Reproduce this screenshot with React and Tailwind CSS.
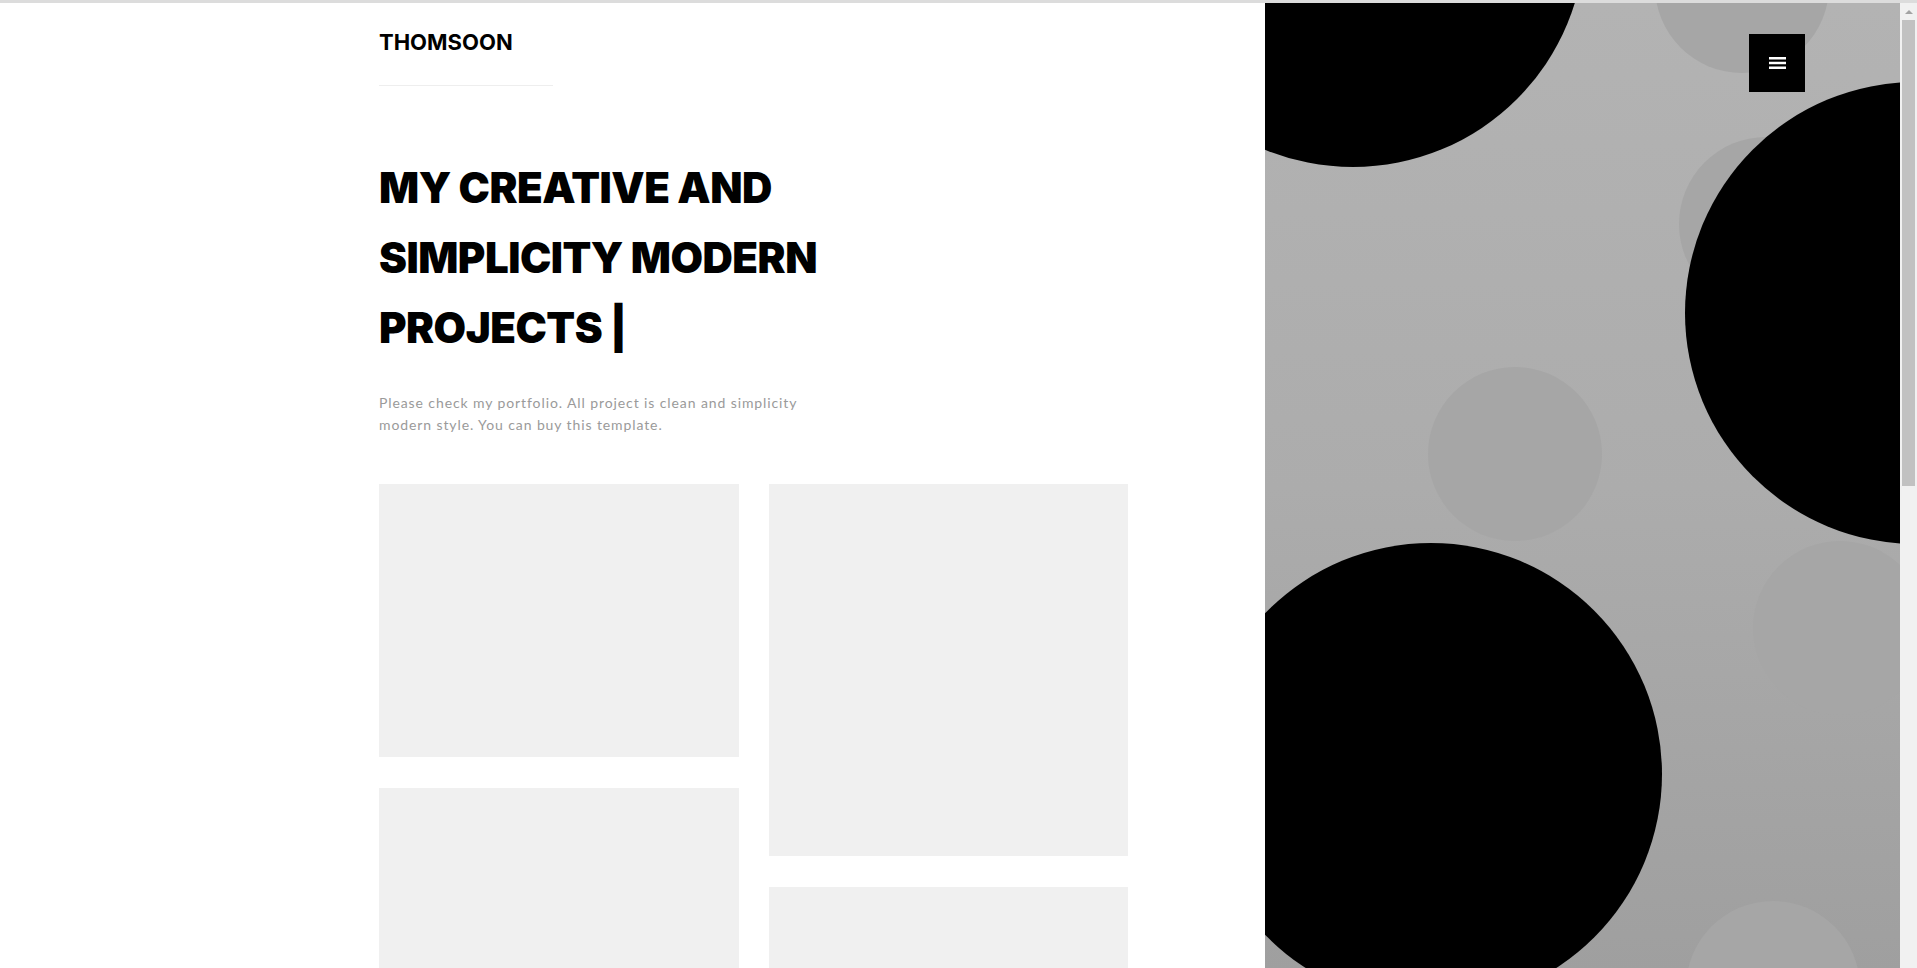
import React from "react";

const leftBoxes = [273, 372, 273, 372];
const rightBoxes = [372, 273, 372, 273];

// decorative circles on the right panel, placed relative to the panel
const circles = [
  { cls: "left-[390px] -top-[104px] w-[174px] h-[174px] bg-[#a6a6a6]" },
  { cls: "left-[414px] top-[134px] w-[174px] h-[174px] bg-[#a6a6a6]" },
  { cls: "left-[163px] top-[364px] w-[174px] h-[174px] bg-[#a6a6a6]" },
  { cls: "left-[488px] top-[538px] w-[174px] h-[174px] bg-[#a6a6a6]" },
  { cls: "left-[421px] top-[898px] w-[174px] h-[174px] bg-[#a6a6a6]" },
  { cls: "-left-[144px] -top-[300px] w-[464px] h-[464px] bg-black" },
  { cls: "left-[420px] top-[79px] w-[462px] h-[462px] bg-black" },
  { cls: "-left-[65px] top-[540px] w-[462px] h-[462px] bg-black" },
];

const App = () => {
  return (
    <div className="bg-white">
      {/* top strip */}
      <div className="h-[3px] bg-[#dcdcdc]" />
      <div className="flex items-start">
        {/* Left content */}
        <div className="flex-1 pl-[379px] pt-[28px] pb-[64px]">
          <div className="w-[174px] border-b border-[#eeeeee] pb-[31px]">
            <p className="font-['Inter',sans-serif] font-bold text-[22px] leading-[23px] text-black">
              THOMSOON
            </p>
          </div>

          <h1 className="mt-[67px] font-['Inter',sans-serif] font-black text-[42px] leading-[70px] tracking-[-0.5px] text-black">
            MY CREATIVE AND
            <br />
            SIMPLICITY MODERN
            <br />
            PROJECTS |
          </h1>

          <p className="mt-[29px] w-[440px] font-['Lato',sans-serif] text-[14px] leading-[22px] tracking-[0.9px] text-[#9a9a9a]">
            Please check my portfolio. All project is clean and simplicity modern style. You can buy this template.
          </p>

          {/* Portfolio grid */}
          <div className="mt-[48px] flex gap-[30px] w-[749px]">
            <div className="flex-1 flex flex-col gap-[31px]">
              {leftBoxes.map((h, i) => (
                <div key={i} className="bg-[#f0f0f0]" style={{ height: h }} />
              ))}
            </div>
            <div className="flex-1 flex flex-col gap-[31px]">
              {rightBoxes.map((h, i) => (
                <div key={i} className="bg-[#f0f0f0]" style={{ height: h }} />
              ))}
            </div>
          </div>
        </div>

        {/* Right decorative panel + page scrollbar */}
        <div className="sticky top-0 h-screen flex">
          <div className="w-[635px] h-full relative overflow-hidden bg-gradient-to-b from-[#b3b3b3] via-[#acacac] to-[#9f9f9f]">
            {circles.map((c, i) => (
              <div key={i} className={"absolute rounded-full " + c.cls} />
            ))}
            <button className="absolute top-[31px] right-[95px] w-14 h-[58px] bg-black flex items-center justify-center">
              <svg width="17" height="12" viewBox="0 0 17 12">
                <rect x="0" y="0" width="17" height="2.5" fill="#fff" />
                <rect x="0" y="4.75" width="17" height="2.5" fill="#fff" />
                <rect x="0" y="9.5" width="17" height="2.5" fill="#fff" />
              </svg>
            </button>
          </div>
          <div className="w-[17px] h-full bg-[#f1f1f1] flex flex-col items-center">
            <div className="h-[17px] flex items-center justify-center">
              <div className="w-0 h-0 border-l-[4px] border-r-[4px] border-b-[4px] border-l-transparent border-r-transparent border-b-[#a3a3a3]" />
            </div>
            <div className="w-[13px] h-[466px] bg-[#c1c1c1]" />
          </div>
        </div>
      </div>
    </div>
  );
};

export default App;
